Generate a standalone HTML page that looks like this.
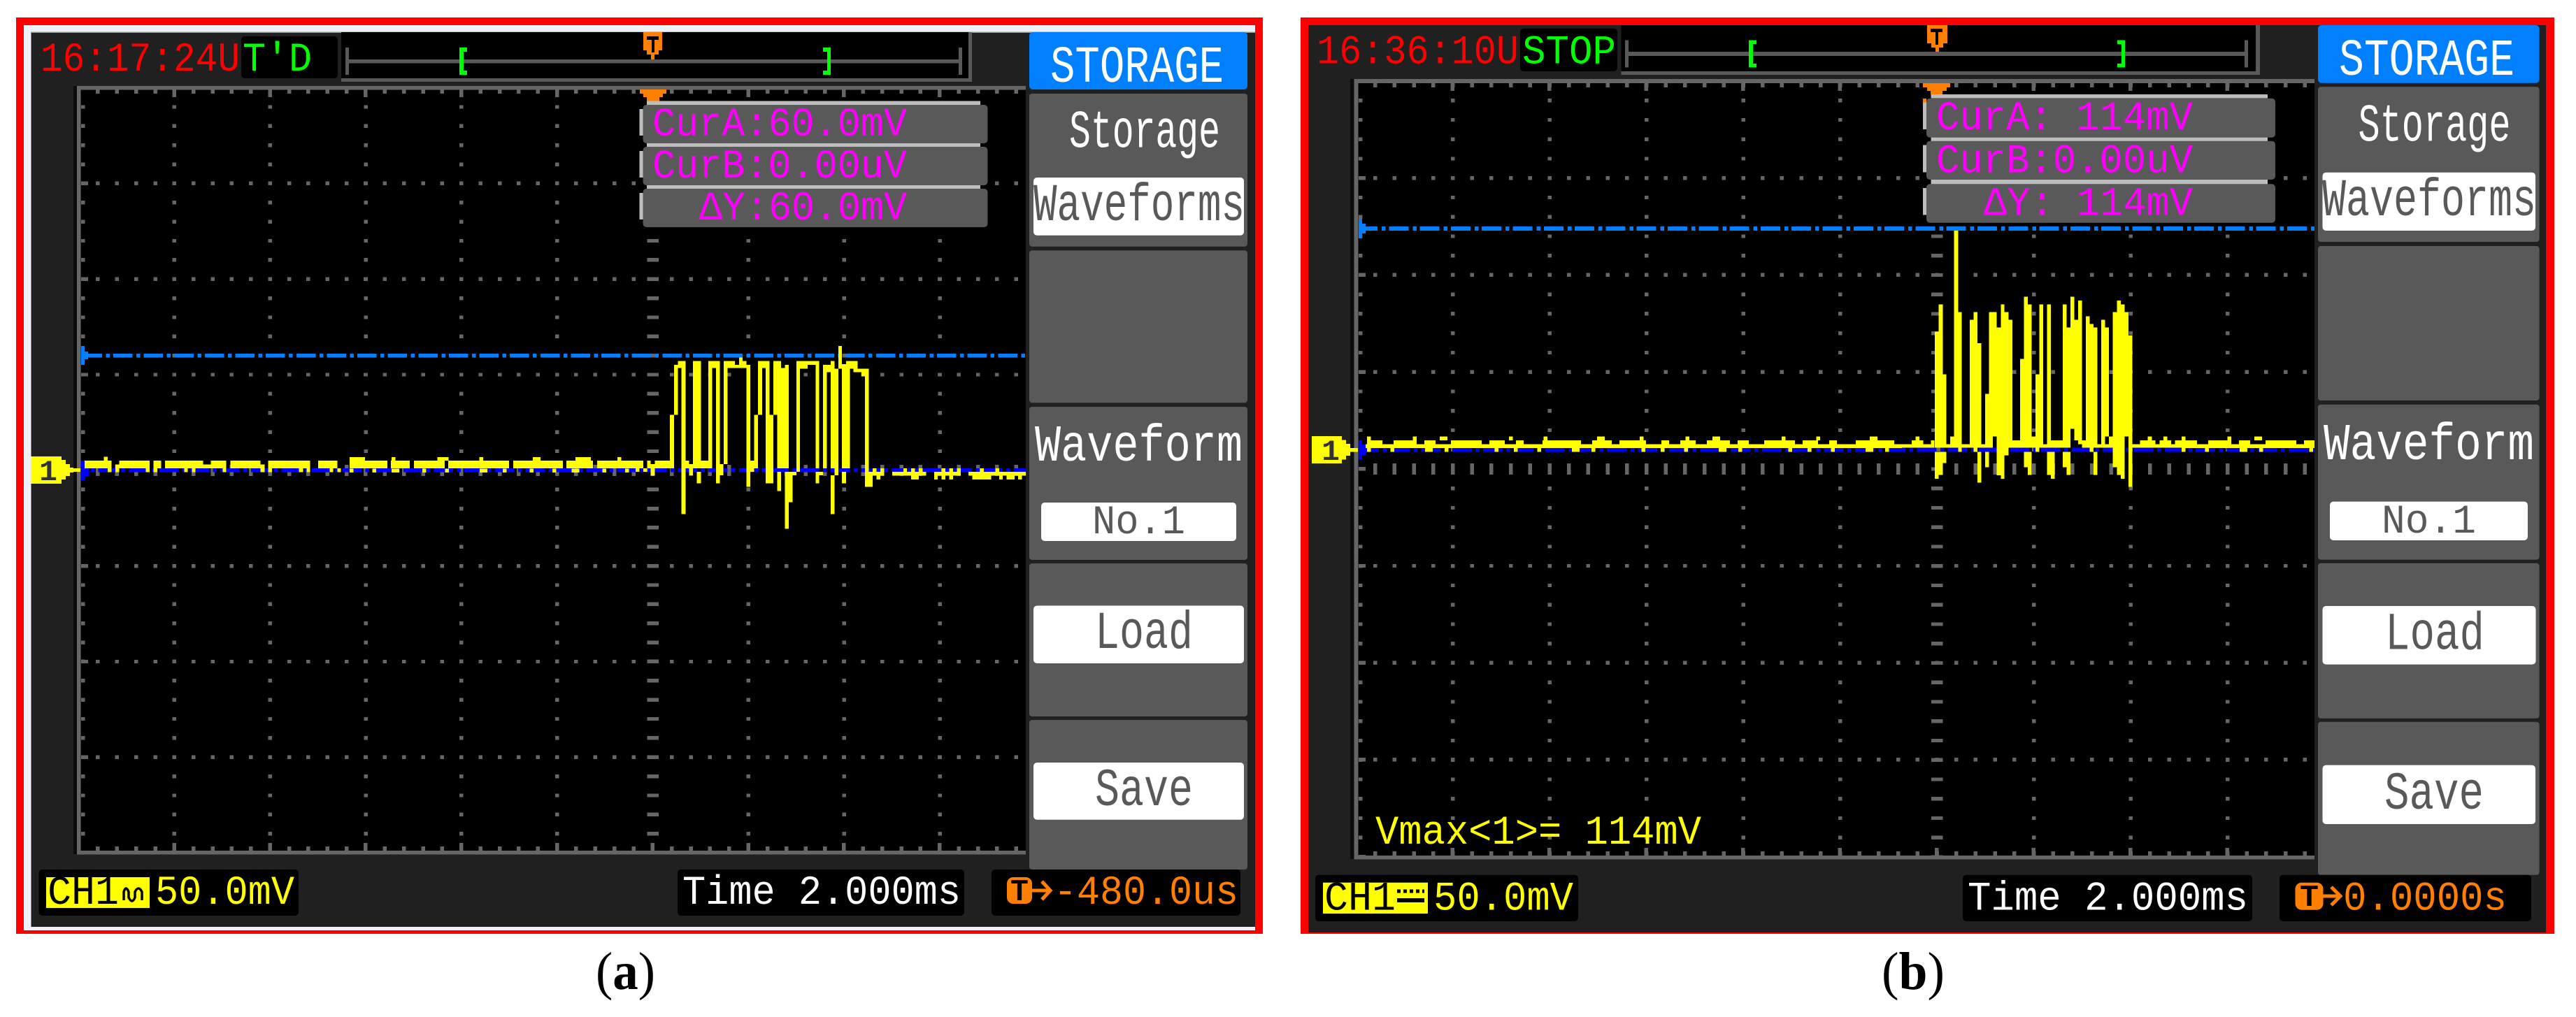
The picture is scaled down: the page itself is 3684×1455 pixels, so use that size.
<!DOCTYPE html>
<html lang="en"><head><meta charset="utf-8"><title>Oscilloscope screenshots</title>
<style>
html,body{margin:0;padding:0;background:#fff;width:3684px;height:1455px;overflow:hidden}
svg{position:absolute;left:0;top:0;display:block}
text{font-family:"Liberation Mono",monospace;white-space:pre}
.cap{font-family:"Liberation Serif",serif;font-size:76px;fill:#000}
</style></head><body>
<svg xmlns="http://www.w3.org/2000/svg" width="3684" height="1455" viewBox="0 0 3684 1455">

<!-- ================= PANEL A ================= -->
<rect x="23" y="25" width="1783" height="1311" fill="#f00"/>
<rect x="34" y="36" width="1761" height="1295" fill="#edf1fa"/>
<rect x="44.5" y="46" width="1750.5" height="1280" fill="#202020"/>
<rect x="44" y="45.5" width="1751" height="1.5" fill="#999"/>
<!-- top strip -->
<rect x="345" y="52" width="138" height="60" rx="5" fill="#000"/>
<rect x="488" y="46" width="902" height="71" fill="#595959"/>
<rect x="488" y="46" width="897" height="66" fill="#000"/>
<g shape-rendering="crispEdges">
<rect x="494" y="85" width="881" height="5.5" fill="#595959"/>
<rect x="494" y="68" width="5" height="39" fill="#595959"/>
<rect x="1371" y="68" width="5" height="39" fill="#595959"/>
<path d="M657 68H668V74H663V101H668V107H657z" fill="#0f0"/>
<path d="M1177 68H1188V107H1177V101H1183V74H1177z" fill="#0f0"/>
<path d="M920 46H947V72H942V78H936V85H931V78H925V72H920z" fill="#ff8000"/>
<path d="M925 52H942V57H936V75H932V57H925z" fill="#000"/>
</g>
<text x="58" y="101" font-size="58" textLength="285" lengthAdjust="spacingAndGlyphs" fill="#f00">16:17:24U</text>
<text x="347" y="101" font-size="58" textLength="99" lengthAdjust="spacingAndGlyphs" fill="#0f0">T'D</text>

<!-- screen -->
<rect x="105" y="123" width="1362" height="1099" fill="#0c0c0c"/>
<rect x="116" y="128" width="1351" height="1089" fill="#000"/>
<g shape-rendering="crispEdges">
<rect x="110" y="123" width="1357" height="5.5" fill="#666"/>
<rect x="110" y="1217" width="1357" height="5.5" fill="#666"/>
<rect x="110" y="123" width="5.7" height="1099" fill="#666"/>
<g fill="none" stroke="#666">
<path d="M137.2 131H1467M137.2 1214H1467" stroke-width="6" stroke-dasharray="5.5 21.86"/>
<path d="M246.6 133.5H1467M246.6 1211.5H1467" stroke-width="11" stroke-dasharray="5.5 131.3"/>
<path d="M249.4 150.3V1217M386.2 150.3V1217M523 150.3V1217M659.8 150.3V1217M796.6 150.3V1217M1070.4 150.3V1217M1207.2 150.3V1217M1344 150.3V1217M118.5 150.3V1217" stroke-width="5.5" stroke-dasharray="5.4 21.96"/>
<path d="M933.6 150.3V1217" stroke-width="16.5" stroke-dasharray="5.4 21.96"/>
<path d="M137.2 262.3H1467M137.2 399.2H1467M137.2 536H1467M137.2 809.7H1467M137.2 946.5H1467M137.2 1083.3H1467" stroke-width="5.4" stroke-dasharray="5.5 21.86"/>
<path d="M137.2 672.8H1467" stroke-width="16" stroke-dasharray="5.5 21.86"/>
<path d="M121 259.6V1217" stroke-width="10" stroke-dasharray="5.4 131.44"/>
<!-- cursors -->
<path d="M118.4 508.5H1467" stroke="#0080ff" stroke-width="5.5" stroke-dasharray="27.5 5.5 5.5 5.13"/>
<path d="M126 672.7H1467" stroke="#00f" stroke-width="5.5" stroke-dasharray="27.5 5.5 5.5 5.13" stroke-dashoffset="29"/>
</g>
<path d="M116 495H121V503H126V514H121V522H116z" fill="#0080ff"/>
<path d="M116 659H121V664H127V681H121V687H116z" fill="#00f"/>
<!-- trace A -->
<g fill="#ff0">
<path transform="translate(0,560) scale(.33333)" d="M363 297H478V330H363zM445 280H462V297H445zM462 330H478V346H462zM495 313H511V346H495zM511 297H642V330H511zM625 330H642V346H625zM658 297H691V330H658zM658 330H675V346H658zM708 297H872V330H708zM872 313H905V330H872zM905 297H970V330H905zM790 330H806V346H790zM823 330H838V346H823zM955 330H970V346H955zM988 297H1118V330H988zM1118 313H1135V346H1118zM1150 297H1330V330H1150zM1150 330H1167V346H1150zM1283 330H1300V346H1283zM1315 330H1330V346H1315zM1365 297H1447V330H1365zM1415 330H1430V346H1415zM1447 330H1463V346H1447z"/>
<path transform="translate(900,460) scale(.38265,.33333)" d="M0 597H52V630H0zM24 630H38V645H24zM52 630H66V645H52zM66 597H80V630H66zM80 612H95V662H80zM95 597H167V630H95zM152 400H167V597H152zM167 186H181V400H167zM167 186H210V200H167zM181 170H210V186H181zM195 200H210V827H195zM210 597H224V630H210zM224 612H238V660H224zM238 170H268V630H238zM252 645H268V695H252zM268 597H310V630H268zM295 170H310V597H295zM310 170H338V200H310zM324 200H338V695H324zM338 612H352V660H338zM353 170H367V612H353zM367 170H395V200H367zM395 186H410V200H395zM410 155H424V200H410zM424 170H438V200H424zM438 186H452V710H438zM452 597H481V630H452zM452 630H466V645H452zM467 400H481V597H467zM481 170H496V400H481zM496 170H524V200H496zM510 200H524V400H510zM510 400H538V695H510zM538 170H567V400H538zM553 400H596V630H553zM567 200H596V400H567zM581 186H596V200H581zM553 645H567V727H553zM581 645H596V890H581zM596 645H610V776H596zM610 645H624V660H610zM624 170H638V645H624zM638 170H710V186H638zM638 186H666V203H638zM696 186H710V630H696zM696 645H710V695H696zM710 645H724V660H710zM724 186H767V218H724zM753 170H767V186H753zM724 218H738V630H724zM753 203H781V630H753zM767 630H781V660H767zM753 660H767V827H753zM781 105H795V203H781zM795 183H810V203H795zM795 200H824V630H795zM795 645H810V695H795zM810 170H853V203H810zM838 203H895V218H838zM867 218H895V235H867zM881 235H895V645H881zM881 645H910V710H881zM895 645H952V662H895zM910 630H924V645H910zM938 630H952V645H938zM924 662H938V678H924zM982 645H1110V662H982zM1024 630H1038V645H1024zM1053 630H1067V645H1053zM1082 630H1096V645H1082zM1053 662H1082V678H1053zM1139 645H1239V662H1139zM1139 662H1153V678H1139zM1167 662H1181V678H1167zM1196 662H1210V678H1196zM1167 630H1181V645H1167zM1196 630H1210V645H1196zM1225 630H1239V645H1225zM1267 645H1425V662H1267zM1282 662H1353V678H1282zM1310 630H1325V645H1310zM1368 630H1382V645H1368zM1382 662H1396V678H1382zM1410 662H1440V678H1410zM1425 645H1482V662H1425zM1453 662H1468V678H1453z"/>
</g>
<path d="M500 664.5H900" fill="none" stroke="#ff0" stroke-width="11" stroke-dasharray="54 5 27 6 44 5 87 6 71 5 38 6 82 5 60"/>
<path d="M500 673H900" fill="none" stroke="#ff0" stroke-width="5.5" stroke-dasharray="5.5 27 5.5 22 11 33 5.5 27 5.5 44 11 22 5.5 33"/>
<path d="M500 656.5H900" fill="none" stroke="#ff0" stroke-width="5" stroke-dasharray="22 38 5.5 60 16 44 5.5 71 11 50"/>
<!-- ch marker -->
<path d="M44.5 653H88V658H94V664H100V669H105V670H115V675H105V676H100V681H94V686H88V692H44.5z" fill="#ff0"/>
<!-- trigger triangle -->
<path d="M915 128H953V134H948V139H943V145H925V139H920V134H915z" fill="#ff8000"/>
</g>
<text x="56" y="687" font-size="42" font-weight="bold" textLength="26" lengthAdjust="spacingAndGlyphs" fill="#333">1</text>

<!-- readouts A -->
<g shape-rendering="crispEdges">
<rect x="925" y="144.7" width="477" height="5.5" fill="#bdbdbd"/><rect x="914.5" y="156" width="5" height="38" fill="#bdbdbd"/>
<rect x="925" y="205" width="477" height="5.5" fill="#bdbdbd"/><rect x="914.5" y="216" width="5" height="38" fill="#bdbdbd"/>
<rect x="925" y="265" width="477" height="5.5" fill="#bdbdbd"/><rect x="914.5" y="276" width="5" height="38" fill="#bdbdbd"/>
</g>
<rect x="919.5" y="150" width="493" height="55" rx="5" fill="#595959"/>
<rect x="919.5" y="210" width="493" height="55" rx="5" fill="#595959"/>
<rect x="919.5" y="270" width="493" height="55" rx="5" fill="#595959"/>
<text x="933" y="194" font-size="58" textLength="364" lengthAdjust="spacingAndGlyphs" fill="#f0f">CurA:60.0mV</text>
<text x="933" y="254" font-size="58" textLength="364" lengthAdjust="spacingAndGlyphs" fill="#f0f">CurB:0.00uV</text>
<text x="1000" y="314" font-size="58" textLength="297" lengthAdjust="spacingAndGlyphs" fill="#f0f">ΔY:60.0mV</text>

<!-- menu A -->
<rect x="1472" y="46" width="312" height="82" rx="5" fill="#0080ff"/>
<rect x="1472" y="134" width="312" height="218.7" rx="4" fill="#595959"/>
<rect x="1472" y="358.3" width="312" height="218" rx="4" fill="#595959"/>
<rect x="1472" y="582" width="312" height="219" rx="4" fill="#595959"/>
<rect x="1472" y="806" width="312" height="219" rx="4" fill="#595959"/>
<rect x="1472" y="1030" width="312" height="214" rx="4" fill="#595959"/>
<rect x="1478" y="254" width="301" height="82.7" rx="5" fill="#fff"/>
<rect x="1489" y="719" width="279" height="55" rx="5" fill="#fff"/>
<rect x="1478" y="866.5" width="301" height="82.5" rx="5" fill="#fff"/>
<rect x="1478" y="1091" width="301" height="81.7" rx="5" fill="#fff"/>
<text x="1502" y="117" font-size="74" textLength="248" lengthAdjust="spacingAndGlyphs" fill="#fff">STORAGE</text>
<text x="1529" y="210.7" font-size="76" textLength="216" lengthAdjust="spacingAndGlyphs" fill="#fff">Storage</text>
<text x="1478" y="315" font-size="76" textLength="302" lengthAdjust="spacingAndGlyphs" fill="#595959">Waveforms</text>
<text x="1480" y="659" font-size="74" textLength="297" lengthAdjust="spacingAndGlyphs" fill="#fff">Waveform</text>
<text x="1562" y="763" font-size="58" textLength="133" lengthAdjust="spacingAndGlyphs" fill="#595959">No.1</text>
<text x="1566" y="927" font-size="76" textLength="140" lengthAdjust="spacingAndGlyphs" fill="#595959">Load</text>
<text x="1566" y="1152" font-size="76" textLength="140" lengthAdjust="spacingAndGlyphs" fill="#595959">Save</text>

<!-- bottom A -->
<rect x="55.5" y="1244" width="371.5" height="66" rx="5" fill="#000"/>
<rect x="969" y="1244" width="410" height="66" rx="5" fill="#000"/>
<rect x="1418" y="1244" width="356" height="66" rx="5" fill="#000"/>
<rect x="66" y="1255" width="148" height="44" fill="#ff0"/>
<text x="68" y="1293" font-size="58" textLength="102" lengthAdjust="spacingAndGlyphs" fill="#000">CH1</text>
<path d="M177 1288V1276Q180 1266 184 1276V1284Q189 1294 193 1284V1276Q198 1266 203 1276V1288" fill="none" stroke="#000" stroke-width="3.5"/>
<text x="222" y="1293" font-size="58" textLength="199" lengthAdjust="spacingAndGlyphs" fill="#ff0">50.0mV</text>
<text x="976" y="1293" font-size="58" textLength="398" lengthAdjust="spacingAndGlyphs" fill="#fff">Time 2.000ms</text>
<rect x="1440" y="1255" width="36" height="38" rx="9" fill="#ff8000"/>
<text x="1445" y="1288" font-size="44" font-weight="bold" textLength="26" lengthAdjust="spacingAndGlyphs" fill="#000">T</text>
<path d="M1476 1274H1500M1490 1261L1502 1274L1490 1287" fill="none" stroke="#ff8000" stroke-width="5"/>
<text x="1507" y="1293" font-size="58" textLength="264" lengthAdjust="spacingAndGlyphs" fill="#ff8000">-480.0us</text>

<text class="cap" x="852" y="1415" textLength="85" lengthAdjust="spacingAndGlyphs">(<tspan font-weight="bold">a</tspan>)</text>

<!-- ================= PANEL B ================= -->
<rect x="1860" y="25" width="1793" height="1311" fill="#f00"/>
<rect x="1871" y="36" width="1770" height="1298" fill="#202020"/>
<rect x="2174" y="40.7" width="139" height="61.3" rx="5" fill="#000"/>
<rect x="2318.5" y="36" width="913.5" height="71" fill="#595959"/>
<rect x="2318.5" y="36" width="907.5" height="66" fill="#000"/>
<g shape-rendering="crispEdges">
<rect x="2324" y="74" width="891" height="6" fill="#595959"/>
<rect x="2324" y="57.7" width="5" height="39" fill="#595959"/>
<rect x="3210" y="57.7" width="5" height="39" fill="#595959"/>
<path d="M2501 57.7H2512V63H2507V91H2512V96.7H2501z" fill="#0f0"/>
<path d="M3028 57.7H3039V96.7H3028V91H3034V63H3028z" fill="#0f0"/>
<path d="M2756 36H2785V62H2779V68H2773V74H2768V68H2762V62H2756z" fill="#ff8000"/>
<path d="M2761 41H2778V46H2772V64H2768V46H2761z" fill="#000"/>
</g>
<text x="1883" y="90.7" font-size="58" textLength="289" lengthAdjust="spacingAndGlyphs" fill="#f00">16:36:10U</text>
<text x="2177" y="90.7" font-size="58" textLength="134" lengthAdjust="spacingAndGlyphs" fill="#0f0">STOP</text>

<!-- screen B -->
<rect x="1931" y="113" width="1379" height="1116" fill="#0c0c0c"/>
<rect x="1942" y="119" width="1368" height="1105" fill="#000"/>
<g shape-rendering="crispEdges">
<rect x="1936.5" y="113" width="1373.5" height="6" fill="#666"/>
<rect x="1936.5" y="1224" width="1373.5" height="5.5" fill="#666"/>
<rect x="1936.5" y="113" width="6" height="1116" fill="#666"/>
<g fill="none" stroke="#666">
<path d="M1964 122H3310M1964 1221H3310" stroke-width="6" stroke-dasharray="5.5 22.2"/>
<path d="M2074.7 124.5H3310M2074.7 1218.5H3310" stroke-width="11" stroke-dasharray="5.5 133"/>
<path d="M2077.5 141V1224M2216 141V1224M2354.5 141V1224M2493 141V1224M2631.5 141V1224M2908.5 141V1224M3047 141V1224M3185.5 141V1224M1945.5 141V1224" stroke-width="5.5" stroke-dasharray="5.4 22.35"/>
<path d="M2770 141V1224" stroke-width="16.5" stroke-dasharray="5.4 22.35"/>
<path d="M1964 254.7H3310M1964 393.4H3310M1964 532.1H3310M1964 809.5H3310M1964 948.2H3310M1964 1086.9H3310" stroke-width="5.4" stroke-dasharray="5.5 22.2"/>
<path d="M1964 670.8H3310" stroke-width="16" stroke-dasharray="5.5 22.2"/>
<path d="M1948 252V1224" stroke-width="10" stroke-dasharray="5.4 133.3"/>
<path d="M1953 327H3310" stroke="#0080ff" stroke-width="6" stroke-dasharray="28 6 5.5 4.8" stroke-dashoffset="11"/>
<path d="M1953 643.7H3310" stroke="#00f" stroke-width="6" stroke-dasharray="28 5.5 5.5 5.3" stroke-dashoffset="9"/>
</g>
<path d="M1943 313H1948V320H1953V334H1948V341H1943z" fill="#0080ff"/>
<path d="M1943 630H1948V636H1953V651H1948V657H1943z" fill="#00f"/>
<!-- trace B -->
<path d="M1953 638H2720M3120 638H3310" fill="none" stroke="#ff0" stroke-width="5.5"/>
<path d="M1955 632.5H2720M3120 632.5H3310" fill="none" stroke="#ff0" stroke-width="5.5" stroke-dasharray="22 16 33 11 16 22 44 11 22 16 11 27 55 16 28 11 38 22 11 16"/>
<path d="M1955 627H2720M3120 627H3310" fill="none" stroke="#ff0" stroke-width="5.5" stroke-dasharray="5.5 60 5.5 33 11 88 5.5 44 5.5 71 11 50"/>
<path d="M1955 643.7H2720M3120 643.7H3310" fill="none" stroke="#ff0" stroke-width="6" stroke-dasharray="5.5 28 5.5 44 11 17 5.5 66 5.5 22"/>
<path transform="translate(2720,300) scale(.33333)" fill="#ff0" d="M0 1006H140V1022H0zM42 990H92V1006H42zM58 973H75V990H58zM125 990H140V1006H125zM141 523H158V1022H141zM158 407H175V1022H158zM175 706H191V1006H175zM141 1040H158V1155H141zM158 1040H175V1138H158zM175 1040H191V1088H175zM175 1006H291V1022H175zM207 973H224V1006H207zM224 90H241V1006H224zM241 440H257V1040H241zM291 473H307V1022H291zM307 440H324V1040H307zM324 573H340V1006H324zM324 1040H340V1172H324zM324 1006H390V1022H324zM357 1040H374V1105H357zM357 790H374V1022H357zM374 440H390V1022H374zM390 440H407V973H390zM407 506H424V1140H407zM424 407H440V1155H424zM440 440H457V1055H440zM457 473H474V990H457zM457 990H507V1022H457zM507 640H524V1022H507zM524 373H540V1022H524zM540 407H556V973H540zM540 973H573V1022H540zM524 1040H556V1105H524zM540 1105H556V1138H540zM573 706H590V1040H573zM590 407H606V1006H590zM590 1006H639V1022H590zM622 407H639V1022H622zM622 1040H656V1138H622zM639 1138H656V1155H639zM639 990H690V1022H639zM690 407H706V1022H690zM690 1040H723V1105H690zM706 506H723V1022H706zM706 1105H723V1138H706zM723 373H739V940H723zM739 473H756V990H739zM756 390H772V1006H756zM772 990H789V1022H772zM789 457H805V1022H789zM805 490H822V1040H805zM822 506H838V1022H822zM822 1040H838V1138H822zM838 1006H855V1022H838zM855 473H872V1006H855zM872 506H888V973H872zM888 973H905V1006H888zM855 1006H905V1022H855zM905 440H922V1105H905zM922 390H939V1138H922zM939 407H955V1155H939zM955 440H972V973H955zM972 540H989V1190H972zM989 1006H1200V1022H989zM1022 990H1055V1006H1022zM1055 973H1072V1006H1055zM1072 990H1088V1006H1072zM1105 990H1122V1006H1105zM1122 973H1138V1006H1122zM1138 990H1155V1006H1138zM1172 990H1200V1006H1172z"/>
<path d="M1876 624.2H1919V629.7H1925V635.2H1931V641H1942V646.5H1931V652.2H1925V657.7H1919V663.2H1876z" fill="#ff0"/>
<path d="M2750 119H2789V125H2784V130H2778V135H2761V130H2756V125H2750z" fill="#ff8000"/>
<rect x="2750" y="141" width="5" height="5.5" fill="#ff8000"/>
</g>
<text x="1890" y="658" font-size="42" font-weight="bold" textLength="26" lengthAdjust="spacingAndGlyphs" fill="#333">1</text>

<!-- readouts B -->
<g shape-rendering="crispEdges">
<rect x="2761.5" y="135" width="481.5" height="5.7" fill="#bdbdbd"/><rect x="2750" y="146.7" width="5" height="38.3" fill="#bdbdbd"/>
<rect x="2761.5" y="196.7" width="481.5" height="5.3" fill="#bdbdbd"/><rect x="2750" y="207.7" width="5" height="39" fill="#bdbdbd"/>
<rect x="2761.5" y="257" width="481.5" height="6.3" fill="#bdbdbd"/><rect x="2750" y="269" width="5" height="38.7" fill="#bdbdbd"/>
</g>
<rect x="2755" y="140.7" width="499" height="56" rx="5" fill="#595959"/>
<rect x="2755" y="201.7" width="499" height="55.3" rx="5" fill="#595959"/>
<rect x="2755" y="263.3" width="499" height="55.4" rx="5" fill="#595959"/>
<text x="2769" y="185" font-size="58" textLength="367" lengthAdjust="spacingAndGlyphs" fill="#f0f">CurA: 114mV</text>
<text x="2769" y="246.7" font-size="58" textLength="367" lengthAdjust="spacingAndGlyphs" fill="#f0f">CurB:0.00uV</text>
<text x="2837" y="307.7" font-size="58" textLength="299" lengthAdjust="spacingAndGlyphs" fill="#f0f">ΔY: 114mV</text>

<!-- menu B -->
<rect x="3315" y="36" width="316.6" height="82.7" rx="5" fill="#0080ff"/>
<rect x="3315" y="124.3" width="316.6" height="221.7" rx="4" fill="#595959"/>
<rect x="3315" y="352" width="316.6" height="221" rx="4" fill="#595959"/>
<rect x="3315" y="578.7" width="316.6" height="222" rx="4" fill="#595959"/>
<rect x="3315" y="805.8" width="316.6" height="222" rx="4" fill="#595959"/>
<rect x="3315" y="1032.8" width="316.6" height="219" rx="4" fill="#595959"/>
<rect x="3321.5" y="246.7" width="304.5" height="83.3" rx="5" fill="#fff"/>
<rect x="3332" y="717.6" width="283" height="55.4" rx="5" fill="#fff"/>
<rect x="3321.5" y="867" width="305" height="83.6" rx="5" fill="#fff"/>
<rect x="3321.5" y="1094.6" width="304.5" height="84.4" rx="5" fill="#fff"/>
<text x="3345" y="107" font-size="74" textLength="251" lengthAdjust="spacingAndGlyphs" fill="#fff">STORAGE</text>
<text x="3372.5" y="201.7" font-size="76" textLength="218" lengthAdjust="spacingAndGlyphs" fill="#fff">Storage</text>
<text x="3321" y="308" font-size="76" textLength="306" lengthAdjust="spacingAndGlyphs" fill="#595959">Waveforms</text>
<text x="3323" y="656.8" font-size="74" textLength="301" lengthAdjust="spacingAndGlyphs" fill="#fff">Waveform</text>
<text x="3406" y="762" font-size="58" textLength="135" lengthAdjust="spacingAndGlyphs" fill="#595959">No.1</text>
<text x="3411" y="928.6" font-size="76" textLength="142" lengthAdjust="spacingAndGlyphs" fill="#595959">Load</text>
<text x="3410" y="1157" font-size="76" textLength="142" lengthAdjust="spacingAndGlyphs" fill="#595959">Save</text>

<!-- bottom B -->
<text x="1967" y="1207" font-size="58" textLength="466" lengthAdjust="spacingAndGlyphs" fill="#ff0">Vmax&lt;1&gt;= 114mV</text>
<rect x="1881" y="1251.7" width="376" height="66.3" rx="5" fill="#000"/>
<rect x="2807" y="1251.7" width="414" height="66.3" rx="5" fill="#000"/>
<rect x="3260" y="1251.7" width="360" height="66.3" rx="5" fill="#000"/>
<rect x="1892" y="1262.7" width="150" height="44.3" fill="#ff0"/>
<text x="1894" y="1301.7" font-size="58" textLength="102" lengthAdjust="spacingAndGlyphs" fill="#000">CH1</text>
<path d="M1998 1288H2037" stroke="#000" stroke-width="6" fill="none"/>
<path d="M1998 1275H2037" stroke="#000" stroke-width="5" stroke-dasharray="5 4" fill="none"/>
<text x="2050" y="1301.7" font-size="58" textLength="200" lengthAdjust="spacingAndGlyphs" fill="#ff0">50.0mV</text>
<text x="2814" y="1301.7" font-size="58" textLength="401" lengthAdjust="spacingAndGlyphs" fill="#fff">Time 2.000ms</text>
<rect x="3282.5" y="1262.7" width="40" height="39" rx="9" fill="#ff8000"/>
<text x="3289" y="1296" font-size="44" font-weight="bold" textLength="27" lengthAdjust="spacingAndGlyphs" fill="#000">T</text>
<path d="M3322 1282H3346M3334 1269L3347 1282L3334 1295" fill="none" stroke="#ff8000" stroke-width="5"/>
<text x="3351" y="1301.7" font-size="58" textLength="234" lengthAdjust="spacingAndGlyphs" fill="#ff8000">0.0000s</text>

<text class="cap" x="2691" y="1415" textLength="90" lengthAdjust="spacingAndGlyphs">(<tspan font-weight="bold">b</tspan>)</text>
</svg>
</body></html>
